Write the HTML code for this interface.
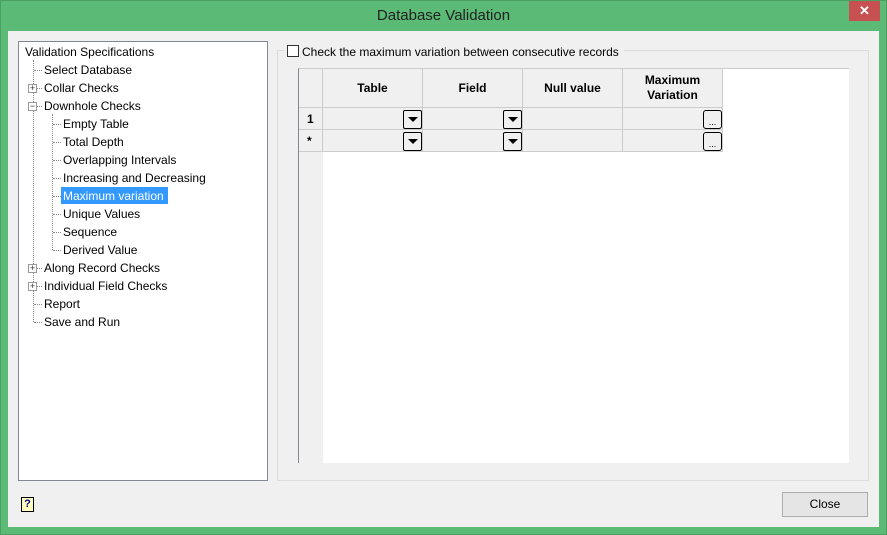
<!DOCTYPE html><html><head><style>
*{margin:0;padding:0;box-sizing:border-box}
body{width:887px;height:535px;background:#5bba75;position:relative;overflow:hidden;font-family:"Liberation Sans",sans-serif;font-size:12px;color:#000}
.a{position:absolute}
.t{position:absolute;white-space:nowrap;line-height:16px;margin-top:1px}
.vd{position:absolute;border-left:1px dotted #888;width:0}
.hd{position:absolute;border-top:1px dotted #888;height:0}
.bx{position:absolute;width:9px;height:9px;border:1px solid #999;background:#fff;font-size:9px;line-height:7px;text-align:center;color:#333}
.hc{position:absolute;top:69px;height:39px;border-right:1px solid #ccc;border-bottom:1px solid #ccc;background:#f0f0f0;font-weight:bold;text-align:center;display:flex;align-items:center;justify-content:center;line-height:15px}
.c{position:absolute;height:22px;border-right:1px solid #ccc;border-bottom:1px solid #ccc;background:#f0f0f0}
.dd{position:absolute;width:19px;height:19px;border:1px solid #000;background:#f0f0f0;border-radius:2px}
.dd:after{content:"";position:absolute;left:4px;top:6px;border-left:5px solid transparent;border-right:5px solid transparent;border-top:5px solid #000}
.el{position:absolute;width:19px;height:19px;border:1px solid #000;border-radius:3px;background:#f0f0f0;font-size:9px;text-align:center;line-height:22px}
</style></head><body>
<div class="a" style="left:0;top:0;width:887px;height:535px;border:1px solid #4a9f63"></div>
<div class="t" style="left:0;width:887px;top:7px;text-align:center;font-size:15px;color:#222">Database Validation</div>
<div class="a" style="left:849px;top:1px;width:31px;height:20px;background:#c75050;color:#fff;text-align:center;font-size:13px;line-height:20px;font-weight:bold">✕</div>
<div class="a" style="left:8px;top:31px;width:871px;height:496px;background:#f0f0f0"></div>
<div class="a" style="left:18px;top:41px;width:250px;height:440px;background:#fff;border:1px solid #828790"></div>
<div class="t" style="left:25px;top:43px">Validation Specifications</div>
<div class="vd" style="left:33px;top:60px;height:262px"></div>
<div class="vd" style="left:52px;top:114px;height:136px"></div>
<div class="hd" style="left:34px;top:70px;width:8px"></div><div class="t" style="left:44px;top:61px">Select Database</div>
<div class="hd" style="left:34px;top:88px;width:8px"></div><div class="t" style="left:44px;top:79px">Collar Checks</div>
<div class="hd" style="left:34px;top:106px;width:8px"></div><div class="t" style="left:44px;top:97px">Downhole Checks</div>
<div class="hd" style="left:53px;top:124px;width:8px"></div><div class="t" style="left:63px;top:115px">Empty Table</div>
<div class="hd" style="left:53px;top:142px;width:8px"></div><div class="t" style="left:63px;top:133px">Total Depth</div>
<div class="hd" style="left:53px;top:160px;width:8px"></div><div class="t" style="left:63px;top:151px">Overlapping Intervals</div>
<div class="hd" style="left:53px;top:178px;width:8px"></div><div class="t" style="left:63px;top:169px">Increasing and Decreasing</div>
<div class="hd" style="left:53px;top:196px;width:8px"></div><div class="a" style="left:61px;top:187px;width:107px;height:17px;background:#3399ff"></div><div class="t" style="left:63px;top:187px;color:#fff">Maximum variation</div>
<div class="hd" style="left:53px;top:214px;width:8px"></div><div class="t" style="left:63px;top:205px">Unique Values</div>
<div class="hd" style="left:53px;top:232px;width:8px"></div><div class="t" style="left:63px;top:223px">Sequence</div>
<div class="hd" style="left:53px;top:250px;width:8px"></div><div class="t" style="left:63px;top:241px">Derived Value</div>
<div class="hd" style="left:34px;top:268px;width:8px"></div><div class="t" style="left:44px;top:259px">Along Record Checks</div>
<div class="hd" style="left:34px;top:286px;width:8px"></div><div class="t" style="left:44px;top:277px">Individual Field Checks</div>
<div class="hd" style="left:34px;top:304px;width:8px"></div><div class="t" style="left:44px;top:295px">Report</div>
<div class="hd" style="left:34px;top:322px;width:8px"></div><div class="t" style="left:44px;top:313px">Save and Run</div>
<div class="bx" style="left:28px;top:84px">+</div>
<div class="bx" style="left:28px;top:102px">−</div>
<div class="bx" style="left:28px;top:264px">+</div>
<div class="bx" style="left:28px;top:282px">+</div>
<div class="a" style="left:277px;top:50px;width:592px;height:431px;border:1px solid #dcdcdc"></div>
<div class="a" style="left:284px;top:43px;width:340px;height:16px;background:#f0f0f0"></div>
<div class="a" style="left:287px;top:45px;width:12px;height:12px;border:1px solid #333;background:#fff"></div>
<div class="t" style="left:302px;top:43px">Check the maximum variation between consecutive records</div>
<div class="a" style="left:298px;top:68px;width:551px;height:395px;background:#fff;border-left:1px solid #828790;border-top:1px solid #ccc"></div>
<div class="a" style="left:299px;top:69px;width:24px;height:394px;background:#f0f0f0"></div>
<div class="hc" style="left:299px;width:24px"></div>
<div class="hc" style="left:323px;width:100px">Table</div>
<div class="hc" style="left:423px;width:100px">Field</div>
<div class="hc" style="left:523px;width:100px">Null value</div>
<div class="hc" style="left:623px;width:100px">Maximum<br>Variation</div>
<div class="c" style="left:299px;top:108px;width:24px;font-weight:bold;line-height:22px;padding-left:8px">1</div>
<div class="c" style="left:323px;top:108px;width:100px"></div><div class="c" style="left:423px;top:108px;width:100px"></div><div class="c" style="left:523px;top:108px;width:100px"></div><div class="c" style="left:623px;top:108px;width:100px"></div>
<div class="c" style="left:299px;top:130px;width:24px;font-weight:bold;line-height:22px;padding-left:8px">*</div>
<div class="c" style="left:323px;top:130px;width:100px"></div><div class="c" style="left:423px;top:130px;width:100px"></div><div class="c" style="left:523px;top:130px;width:100px"></div><div class="c" style="left:623px;top:130px;width:100px"></div>
<div class="dd" style="left:403px;top:110px"></div><div class="dd" style="left:503px;top:110px"></div><div class="el" style="left:703px;top:110px">...</div>
<div class="dd" style="left:403px;top:132px"></div><div class="dd" style="left:503px;top:132px"></div><div class="el" style="left:703px;top:132px">...</div>
<div class="a" style="left:21px;top:497px;width:13px;height:15px;border:1px solid #000;background:#ffffc0;font-size:11px;font-weight:bold;color:#00008b;text-align:center;line-height:13px">?</div>
<div class="a" style="left:782px;top:492px;width:86px;height:25px;border:1px solid #adadad;background:#e5e5e5;text-align:center;line-height:23px">Close</div>
</body></html>
